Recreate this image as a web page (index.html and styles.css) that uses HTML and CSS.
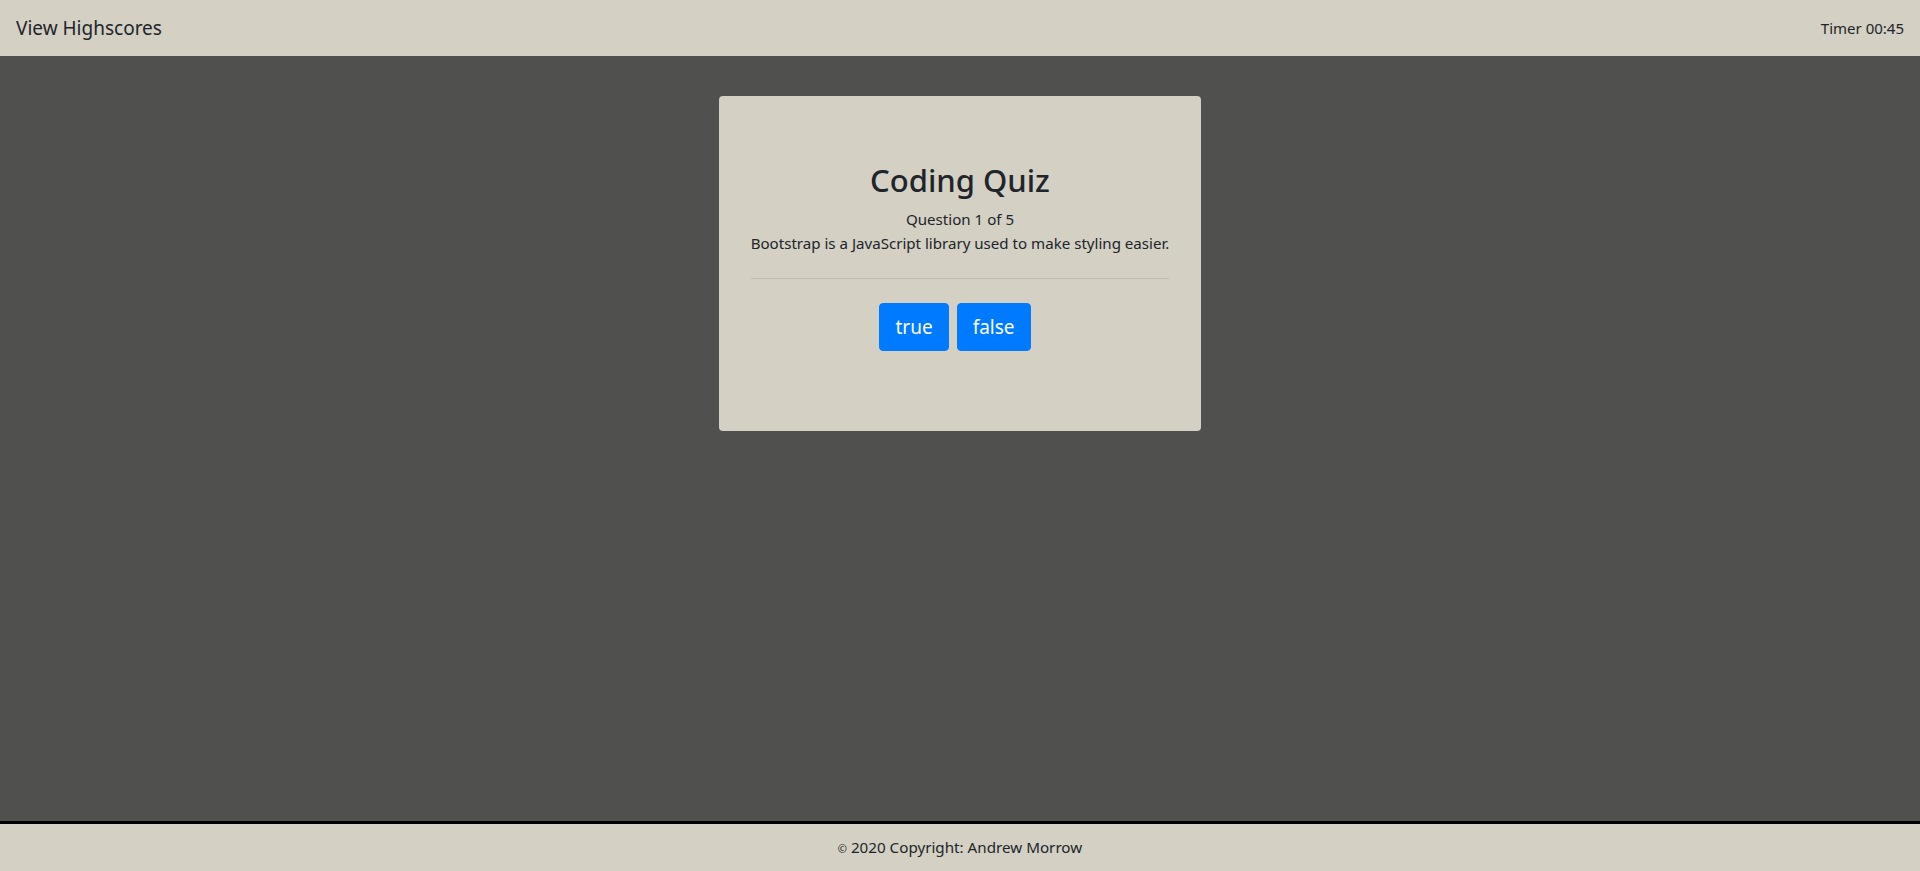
FILE: index.html
```html
<!DOCTYPE html>
<html lang="en">
<head>
<meta charset="utf-8">
<title>Coding Quiz</title>
<link rel="stylesheet" href="styles.css">
</head>
<body>
<nav class="navbar">
  <a class="brand" href="#">View Highscores</a>
  <span class="timer">Timer 00:45</span>
</nav>
<main class="main">
  <section class="card">
    <h2 class="title">Coding Quiz</h2>
    <p class="question">Question 1 of 5<br>Bootstrap is a JavaScript library used to make styling easier.</p>
    <hr class="divider">
    <div class="answers">
      <button class="btn">true</button>
      <button class="btn">false</button>
    </div>
  </section>
</main>
<footer class="footer">
  <span><span class="copy">©</span> 2020 Copyright: Andrew Morrow</span>
</footer>
</body>
</html>
```

FILE: styles.css
```css
* { box-sizing: border-box; }
html, body { margin: 0; padding: 0; }
body {
  height: 100vh;
  display: flex;
  flex-direction: column;
  font-family: "Noto Sans", "Open Sans", sans-serif;
  font-size: 16px;
  line-height: 1.5;
  color: #212529;
  background: #50504e;
}
.navbar {
  height: 56px;
  flex: 0 0 56px;
  background: #d4d0c4;
  display: flex;
  align-items: center;
  justify-content: space-between;
  padding: 0 16px;
}
.brand {
  font-size: 19px;
  color: #212529;
  text-decoration: none;
  line-height: 1.5;
}
.timer {
  font-size: 15px;
  color: #212529;
}
.main {
  flex: 1;
  display: flex;
  justify-content: center;
  align-items: flex-start;
  padding-top: 40px;
}
.card {
  width: 482px;
  height: 335px;
  background: #d4d0c4;
  border-radius: 4px;
  padding: 66px 32px 0;
  text-align: center;
}
.title {
  margin: 0 0 8px;
  font-size: 31px;
  font-weight: 500;
  line-height: 1.2;
}
.question {
  margin: 0 -16px;
  white-space: nowrap;
  font-size: 15.1px;
  line-height: 24px;
}
.divider {
  margin: 23px 0 24px;
  border: 0;
  border-top: 1px solid rgba(0,0,0,0.1);
}
.answers {
  display: flex;
  justify-content: center;
  gap: 8px;
  padding-right: 10px;
}
.btn {
  font-family: inherit;
  font-size: 19px;
  line-height: 30px;
  padding: 8px 15px;
  height: 48px;
  color: #fff;
  background: #007bff;
  border: 1px solid #007bff;
  border-radius: 4px;
  cursor: pointer;
}
.footer {
  flex: 0 0 50px;
  border-top: 3px solid #000;
  background: #d4d0c4;
  display: flex;
  align-items: center;
  justify-content: center;
  font-size: 15.2px;
}
.copy { font-size: 11px; }
```
